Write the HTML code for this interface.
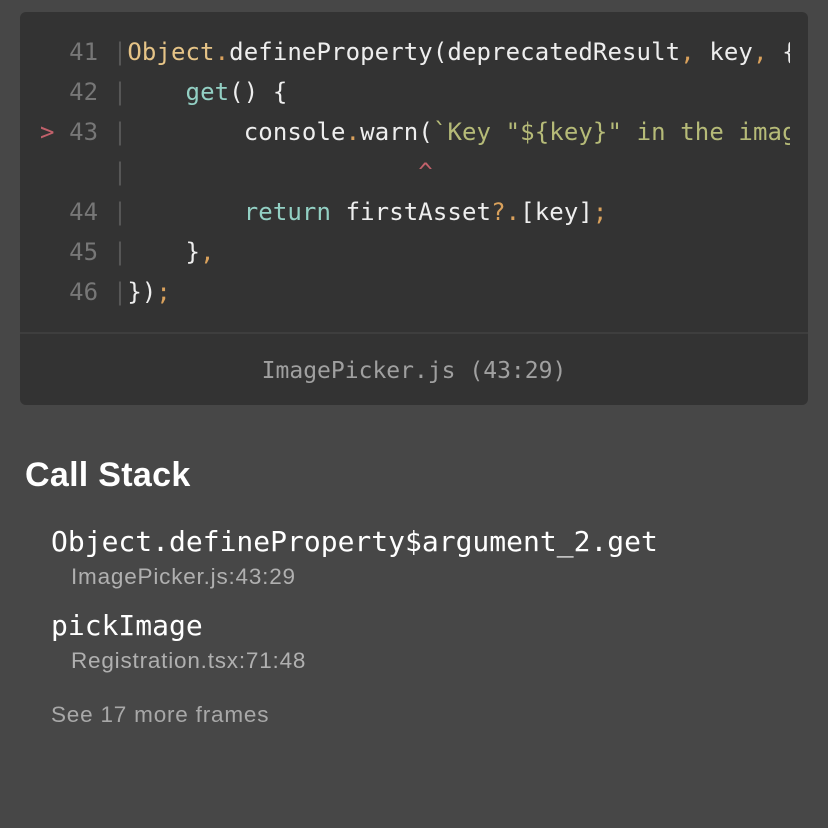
<!DOCTYPE html>
<html><head><meta charset="utf-8"><style>
html,body{margin:0;padding:0;}
body{width:828px;height:828px;background:#474747;position:relative;overflow:hidden;font-family:"Liberation Sans",sans-serif;}
.card{position:absolute;left:20px;top:12px;width:788px;height:393px;background:#333333;border-radius:6px;overflow:hidden;}
.div{position:absolute;left:0;top:320px;width:788px;height:2px;background:#3e3e3e;}
pre{margin:0;position:absolute;left:20px;top:20px;width:750px;overflow:hidden;font-family:"DejaVu Sans Mono",monospace;font-size:24px;letter-spacing:0.1px;line-height:40px;color:#eeeeee;white-space:pre;}
.n{color:#777}.p{color:#575757}.r{color:#c2616b}.y{color:#e6c487}.o{color:#d9a15c}.t{color:#93d0c4}.s{color:#b6bb78}
.foot{position:absolute;left:0;top:339px;width:788px;text-align:center;font-family:"DejaVu Sans Mono",monospace;font-size:23px;color:#a0a0a0;line-height:40px;}
.abs{position:absolute;white-space:nowrap;}
.h{left:25px;top:455px;font-size:34px;font-weight:bold;color:#fff;line-height:40px;letter-spacing:0.3px;}
.fn{left:51px;font-family:"DejaVu Sans Mono",monospace;font-size:28px;color:#fff;line-height:34px;}
.sub{left:71px;font-size:22.5px;letter-spacing:0.8px;color:#b0b0b0;line-height:28px;}
</style></head><body>
<div class="card">
<pre><span class="n">  41 </span><span class="p">|</span><span class="y">Object</span><span class="o">.</span>defineProperty(deprecatedResult<span class="o">,</span> key<span class="o">,</span> {
<span class="n">  42 </span><span class="p">|</span>    <span class="t">get</span>() {
<span class="r">&gt;</span><span class="n"> 43 </span><span class="p">|</span>        console<span class="o">.</span>warn(<span class="s">`Key "${key}" in the image</span>
<span class="n">     </span><span class="p">|</span>                    <span class="r">^</span>
<span class="n">  44 </span><span class="p">|</span>        <span class="t">return</span> firstAsset<span class="o">?.</span>[key]<span class="o">;</span>
<span class="n">  45 </span><span class="p">|</span>    }<span class="o">,</span>
<span class="n">  46 </span><span class="p">|</span>})<span class="o">;</span></pre>
<div class="div"></div>
<div class="foot">ImagePicker.js (43:29)</div>
</div>
<div class="abs h">Call Stack</div>
<div class="abs fn" style="top:525px">Object.defineProperty$argument_2.get</div>
<div class="abs sub" style="top:563px">ImagePicker.js:43:29</div>
<div class="abs fn" style="top:609px">pickImage</div>
<div class="abs sub" style="top:647px">Registration.tsx:71:48</div>
<div class="abs sub" style="left:51px;top:701px;color:#a8a8a8">See 17 more frames</div>
</body></html>
